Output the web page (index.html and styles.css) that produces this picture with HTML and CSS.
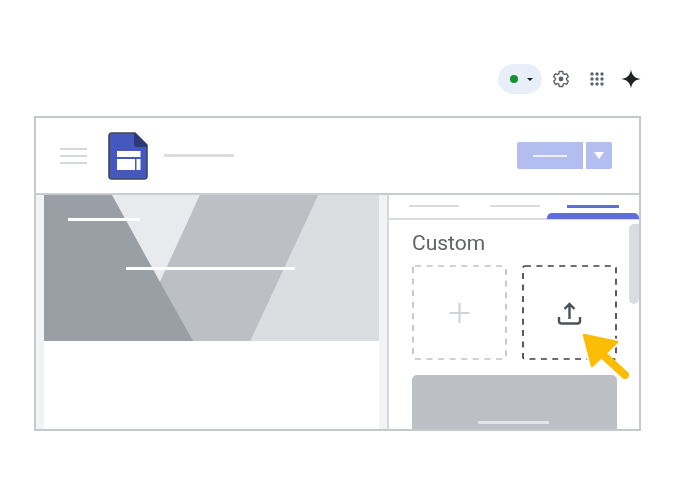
FILE: index.html
```html
<!DOCTYPE html>
<html lang="en">
<head>
<meta charset="utf-8">
<title>Custom theme upload</title>
<link rel="stylesheet" href="styles.css">
</head>
<body>
<div class="toolbar">
  <div class="status-pill"><span class="status-dot"></span><span class="status-caret"></span></div>
  <svg class="tool-gear" viewBox="0 0 24 24" width="18" height="18"><path class="gear-outline" d="M19.43 12.98c.04-.32.07-.64.07-.98s-.03-.66-.07-.98l2.11-1.65c.19-.15.24-.42.12-.64l-2-3.46c-.12-.22-.39-.3-.61-.22l-2.49 1c-.52-.4-1.08-.73-1.69-.98l-.38-2.65C14.46 2.18 14.25 2 14 2h-4c-.25 0-.46.18-.49.42l-.38 2.65c-.61.25-1.17.59-1.69.98l-2.49-1c-.23-.09-.49 0-.61.22l-2 3.46c-.13.22-.07.49.12.64l2.11 1.65c-.04.32-.07.65-.07.98s.03.66.07.98l-2.11 1.65c-.19.15-.24.42-.12.64l2 3.46c.12.22.39.3.61.22l2.49-1c.52.4 1.08.73 1.69.98l.38 2.65c.03.24.24.42.49.42h4c.25 0 .46-.18.49-.42l.38-2.65c.61-.25 1.17-.59 1.69-.98l2.49 1c.23.09.49 0 .61-.22l2-3.46c.12-.22.07-.49-.12-.64l-2.11-1.65z"/><circle class="gear-hub" cx="12" cy="12" r="3.200"/></svg>
  <svg class="tool-apps" viewBox="0 0 14 14" width="14" height="14"><g class="apps-dots"><circle cx="2" cy="2" r="1.700"/><circle cx="7" cy="2" r="1.700"/><circle cx="12" cy="2" r="1.700"/><circle cx="2" cy="7" r="1.700"/><circle cx="7" cy="7" r="1.700"/><circle cx="12" cy="7" r="1.700"/><circle cx="2" cy="12" r="1.700"/><circle cx="7" cy="12" r="1.700"/><circle cx="12" cy="12" r="1.700"/></g></svg>
  <svg class="tool-spark" viewBox="0 0 20 20" width="20" height="20"><path class="spark-shape" d="M10 0.500C10.700 6 14 9.300 19.500 10C14 10.700 10.700 14 10 19.500C9.300 14 6 10.700 0.500 10C6 9.300 9.300 6 10 0.500Z"/></svg>
</div>

<div class="stage">
  <div class="frame">
    <header class="topbar">
      <div class="menu-icon"><span></span><span></span><span></span></div>
      <svg class="logo" viewBox="0 0 40 48" width="40" height="48">
        <path class="logo-page" d="M4 1H27L39 13V44A3 3 0 0 1 36 47H4A3 3 0 0 1 1 44V4A3 3 0 0 1 4 1Z"/>
        <path class="logo-fold" d="M27 1L39 13V15H29A3 3 0 0 1 26 12V1Z"/>
        <rect class="logo-win" x="9" y="19" width="23.500" height="6"/>
        <rect class="logo-win" x="9" y="27" width="18" height="11"/>
        <rect class="logo-win" x="28.500" y="27" width="4" height="11"/>
      </svg>
      <div class="title-line"></div>
      <div class="publish">
        <div class="publish-main"><span></span></div>
        <div class="publish-side"><span></span></div>
      </div>
    </header>
    <div class="workspace">
      <div class="canvas">
        <div class="hero">
          <svg class="hero-art" viewBox="0 0 335 146" width="335" height="146" preserveAspectRatio="none">
            <rect class="art-dark" width="335" height="146"/>
            <polygon class="art-mid" points="156,0 274,0 206,146 149,146 116,87"/>
            <polygon class="art-pale" points="274,0 335,0 335,146 206,146"/>
            <polygon class="art-light" points="68,0 156,0 116,87"/>
            <rect class="art-line" x="24" y="23" width="72" height="3"/>
            <rect class="art-line" x="82" y="72" width="169" height="3"/>
          </svg>
        </div>
      </div>
      <aside class="panel">
        <nav class="tabs">
          <span class="tab tab-a"></span>
          <span class="tab tab-b"></span>
          <span class="tab tab-c"></span>
          <span class="tab-marker"></span>
        </nav>
        <div class="panel-body">
          <h2 class="section-title">Custom</h2>
          <div class="tiles">
            <div class="tile">
              <svg class="tile-art" viewBox="0 0 95 95" width="95" height="95"><rect class="dash dash-light" x="1" y="1" width="93" height="93" rx="2"/><path class="plus" d="M47.500 38V58M37.500 48H57.500"/></svg>
            </div>
            <div class="tile">
              <svg class="tile-art" viewBox="0 0 95 95" width="95" height="95"><rect class="dash dash-dark" x="1" y="1" width="93" height="93" rx="2"/><path class="upload" d="M47.500 54V40M42.500 44L47.500 39L52.500 44M37 52V56A2.500 2.500 0 0 0 39.500 58.500H55.500A2.500 2.500 0 0 0 58 56V52"/></svg>
            </div>
          </div>
          <div class="theme-card"><span></span></div>
          <div class="scroll-thumb"></div>
        </div>
      </aside>
    </div>
    <svg class="pointer" viewBox="0 0 54 54" width="54" height="54">
      <path class="pointer-halo" d="M5 3L38 10L13 34Z"/>
      <path class="pointer-head" d="M5 3L38 10L13 34Z"/>
      <path class="pointer-line" d="M22 21L46 43"/>
    </svg>
  </div>
</div>
</body>
</html>
```

FILE: styles.css
```css
* { box-sizing: border-box; }
html, body { margin: 0; padding: 0; }
body {
  width: 684px;
  height: 500px;
  background: #fff;
  font-family: Roboto, "Liberation Sans", sans-serif;
  overflow: hidden;
}
.toolbar {
  display: flex;
  align-items: center;
  height: 30px;
  margin-top: 64px;
  padding-left: 498px;
}
.status-pill {
  width: 44px;
  height: 30px;
  border-radius: 15px;
  background: #e8eff9;
  display: flex;
  align-items: center;
  padding-left: 12px;
  gap: 9px;
}
.status-dot { width: 8px; height: 8px; border-radius: 50%; background: #12912c; }
.status-caret {
  width: 0; height: 0;
  border-left: 3px solid transparent;
  border-right: 3px solid transparent;
  border-top: 3px solid #202124;
}
.tool-gear { margin-left: 10px; }
.gear-outline { fill: none; stroke: #5f6368; stroke-width: 1.900; }
.gear-hub { fill: #5f6368; }
.tool-apps { margin-left: 20px; }
.apps-dots { fill: #5f6368; }
.tool-spark { margin-left: 17px; }
.spark-shape { fill: #202124; }

.stage { padding: 22px 0 0 34px; }
.frame {
  position: relative;
  width: 607px;
  height: 315px;
  border: 2px solid #c6c9cc;
  filter: blur(0.5px);
}
.topbar {
  display: flex;
  align-items: center;
  height: 77px;
  flex: none;
  border-bottom: 2px solid #c9ccd0;
  padding-left: 24px;
}
.menu-icon { display: flex; flex-direction: column; gap: 5px; width: 27px; }
.menu-icon span { height: 2px; background: #d5d8dc; }
.logo { margin-left: 21px; flex: none; }
.logo-page { fill: #4558c0; stroke: #41484f; stroke-width: 1.600; }
.logo-fold { fill: #2e3a78; }
.logo-win { fill: #fff; }
.title-line { width: 70px; height: 3px; background: #dadce0; margin-left: 16px; }
.publish { display: flex; gap: 3px; margin-left: 283px; }
.publish-main, .publish-side {
  height: 27px;
  background: #b4bdf0;
  display: flex;
  align-items: center;
  justify-content: center;
}
.publish-main { width: 66px; border-radius: 2px 0 0 2px; }
.publish-main span { width: 34px; height: 2px; background: #eef0fb; }
.publish-side { width: 26px; border-radius: 0 2px 2px 0; }
.publish-side span {
  width: 0; height: 0;
  border-left: 5.500px solid transparent;
  border-right: 5.500px solid transparent;
  border-top: 7px solid #fff;
}
.workspace { display: flex; height: 234px; overflow: hidden; }
.canvas {
  width: 353px;
  padding: 0 8px 0 8px;
  background: #f1f3f4;
  border-right: 2px solid #d5d8dc;
  flex: none;
}
.hero { width: 335px; height: 234px; background: #fff; }
.hero-art { display: block; }
.art-dark { fill: #9a9fa6; }
.art-mid { fill: #bcc0c4; }
.art-pale { fill: #dcdde1; }
.art-light { fill: #e8eaed; }
.art-line { fill: #fff; }
.panel { flex: 1; display: flex; flex-direction: column; min-width: 0; }
.tabs {
  position: relative;
  flex: none;
  display: flex;
  align-items: flex-start;
  height: 25px;
  padding: 10px 0 0 20px;
  border-bottom: 2px solid #dadce0;
}
.tab { height: 2px; background: #dadce0; }
.tab-a { width: 50px; }
.tab-b { width: 50px; margin-left: 31px; }
.tab-c { width: 52px; margin-left: 27px; background: #5f6fd8; height: 3px; }
.tab-marker {
  position: absolute;
  left: 158px;
  right: 0;
  bottom: -1px;
  height: 6px;
  background: #5f6fd8;
  border-radius: 5px 5px 0 0;
}
.panel-body { position: relative; flex: 1; min-height: 0; padding: 11px 0 0 23px; overflow: hidden; }
.section-title {
  margin: 0;
  font-size: 21px;
  line-height: 24px;
  font-weight: 400;
  color: #5f6368;
}
.tiles { display: flex; gap: 15px; margin-top: 10px; }
.tile { width: 95px; height: 95px; flex: none; }
.tile-art { display: block; }
.dash { fill: none; stroke-width: 1.700; }
.dash-light { stroke: #bdc1c6; stroke-dasharray: 6 5.600; }
.dash-dark { stroke: #3c4043; stroke-dasharray: 6 5.400; }
.plus { fill: none; stroke: #d0d3d7; stroke-width: 2.200; }
.upload { fill: none; stroke: #4c5156; stroke-width: 2.400; }
.theme-card {
  width: 205px;
  height: 60px;
  margin-top: 15px;
  background: #bcc0c5;
  border-radius: 5px 5px 0 0;
  padding: 46px 0 0 66px;
}
.theme-card span { display: block; width: 71px; height: 3px; background: #e3e4e7; }
.scroll-thumb {
  position: absolute;
  top: 4px;
  right: 0;
  width: 10px;
  height: 80px;
  background: #dadce0;
  border-radius: 5px 0 5px 5px;
}
.pointer { position: absolute; left: 543px; top: 214px; }
.pointer-head { fill: #fbbc04; stroke: #fbbc04; stroke-width: 2.500; stroke-linejoin: round; }
.pointer-line { fill: none; stroke: #fbbc04; stroke-width: 8; stroke-linecap: round; }
.pointer-halo { fill: #fff; stroke: #fff; stroke-width: 6; stroke-linejoin: round; }
```
